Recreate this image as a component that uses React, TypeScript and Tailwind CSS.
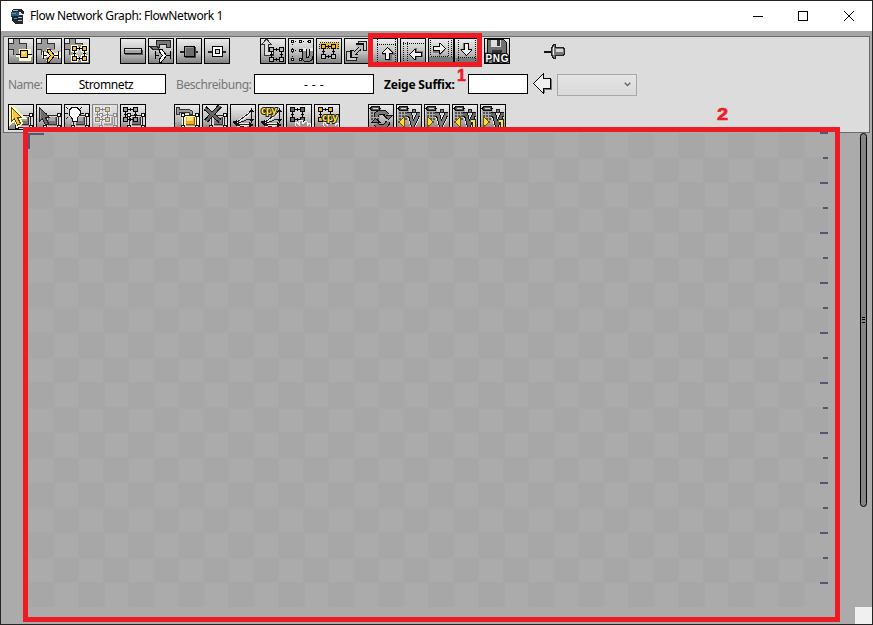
import type { ReactNode } from 'react';

type Kids = { children?: ReactNode };

function Tool({ children, className = '' }: Kids & { className?: string }) {
  return (
    <button className={`block h-[26px] w-[26px] shrink-0 overflow-hidden border border-black bg-linear-to-b from-[#ececec] via-[#bdbdbd] via-60% to-[#808080] p-0 ${className}`}>
      <svg width="24" height="24" viewBox="1 1 24 24" shapeRendering="crispEdges" fill="none">
        {children}
      </svg>
    </button>
  );
}

/* Grey plus in the corner of the "add" tools */
function Plus() {
  return (
    <g>
      <path d="M5 1h7v4h7v7h-7v5H5v-5H1V5h4z" fill="#9b9b9b" />
      <path d="M5.500 1v4.500H1M11.500 1v4.500h7v5M1 11.500h4.500v5" stroke="#333" />
    </g>
  );
}

/* Four linked nodes with arrow heads */
function Net({ x, y, fill = '#d8d8d8', halo = 'none' }: { x: number; y: number; fill?: string; halo?: string }) {
  const lines = 'M4 2.5h6M2.5 5v6M12.5 5v6M5 12.5h5';
  const boxes = 'M.5 .5h4v4h-4zM10.5 .5h4v4h-4zM.5 10.5h4v4h-4zM10.5 10.5h4v4h-4z';
  return (
    <g transform={`translate(${x} ${y})`}>
      <path d={lines + boxes} stroke={halo} strokeWidth="3" />
      <path d={lines} stroke="#000" />
      <path d={boxes} fill={fill} stroke="#000" />
      <path d="M7 1h1v1h1v1H8v1H7zM11 7h3v1h-1v1h-1V8h-1zM8 11v3H7v-1H6v-1h1v-1zM1 7h3v1H3v1H2V8H1z" fill="#000" />
    </g>
  );
}

/* Framed component with four corner handles */
function Component({ gold = false }: { gold?: boolean }) {
  return (
    <g>
      <path d="M9.500 11.500h13v12h-13z" stroke={gold ? '#fffbd0' : '#d8d8d8'} strokeWidth="4" />
      <path d="M9.500 11.500h13v12h-13z" stroke="#222" />
      <path d="M12 13h9v8h-9z" fill={gold ? '#f0ae1d' : '#777'} />
      <path d="M13 13h6v4h-6z" fill={gold ? '#ffe07a' : '#a8a8a8'} />
      <path d="M20 13h1v8h-9v-1h8z" fill={gold ? '#8a5d00' : '#333'} />
      <path d="M7.500 9.500h3v3h-3zM21.500 9.500h3v3h-3zM7.500 21.500h3v3h-3zM21.500 21.500h3v3h-3z" fill="#fff" stroke="#111" />
    </g>
  );
}

function Cursor({ gold = false }: { gold?: boolean }) {
  return (
    <g>
      {gold && <path d="M3 3v15l4-3 3 6 3-2-3-6h4z" stroke="#fff9c2" strokeWidth="4" />}
      <path d="M3.500 3.500v14l3-3 3 7 3-2-3-6h4z" fill={gold ? '#f7c63c' : '#6b6b6b'} stroke={gold ? '#5b4300' : '#222'} />
      <path d="M4.500 6v9" stroke={gold ? '#ffec9a' : '#999'} />
    </g>
  );
}

function Junction({ gold = false }: { gold?: boolean }) {
  return (
    <g>
      <path d="M7 17h16M11 11l7 6-7 7M7.500 14v6M22.500 14v6" stroke={gold ? '#fffbd0' : '#aaa'} strokeWidth="4" />
      <path d="M7 17.500h4M17 17.500h6M7.500 13v8M22.500 13v8" stroke="#000" />
      <path d="M11.500 11v3l3 3.500-3 3.500v3h2l5-6.500-5-6.500z" fill={gold ? '#ffc934' : '#fff'} stroke="#000" />
    </g>
  );
}

function Calculator() {
  return (
    <g>
      <path d="M3 2h9l1 4-1 12H2V5z" fill="#aaa" />
      <path d="M4 2.500h7l1 2-1 2H4l-2-2z" fill="#555" stroke="#111" />
      <path d="M5 4.500h5" stroke="#ddd" />
      <path d="M3 9h8M3 12h8M3 15h8" stroke="#555" strokeWidth="2" strokeDasharray="2 1" />
    </g>
  );
}

function Volume({ back = false, one = false }: { back?: boolean; one?: boolean }) {
  const letter = 'M11 10.5h3l3 11 5-11h2';
  return (
    <Tool>
      <Calculator />
      <path d={letter} stroke="#e8e8e8" strokeWidth="6" />
      <path d={letter} stroke="#111" strokeWidth="4.500" />
      <path d={letter} stroke={one ? '#666' : '#7c7c7c'} strokeWidth="2.500" />
      <path d="M16.500 5.500h3v3h-3z" fill="#777" stroke="#222" />
      {back ? (
        <path d="M8.500 13v10l-6-5z" fill="#ffdb38" stroke="#725400" />
      ) : (
        <path d="M3.500 13v10l6-5z" fill="#ffdb38" stroke="#725400" />
      )}
      {one && (
        <g>
          <path d="M19 16.500h3v8" stroke="#222" strokeWidth="4" />
          <path d="M19 16.500h3v7M18 24h7" stroke="#ffe23f" strokeWidth="2" />
        </g>
      )}
    </Tool>
  );
}

function MoveTool({ turn, dx = 0, dy = 0 }: { turn: number; dx?: number; dy?: number }) {
  return (
    <g transform={`translate(${dx} ${dy}) rotate(${turn} 13 13)`}>
      <path d="M13.500 6.500l6 6v1h-3v6h-6v-6h-3z" fill="#777" />
      <path d="M12.500 6.500l5 5v1h-3v6h-4v-6h-3v-1z" fill="#eee" stroke="#000" />
    </g>
  );
}

function Copy({ x, y }: { x: number; y: number }) {
  return (
    <text
      x={x}
      y={y}
      fill="#ffe23f"
      stroke="#222"
      strokeWidth="2"
      paintOrder="stroke"
      className="font-['Liberation_Sans'] text-[11px] font-bold"
      textLength="16"
    >
      cpy
    </text>
  );
}

function Branches() {
  return (
    <g>
      <path d="M5 20L20 9M7 20h13M7 21l13 4" stroke="#eee" strokeWidth="3" />
      <path d="M6 19L20 8.500M6 20l13-5M7 20.500h13M7 21l13 4" stroke="#222" />
      <path d="M19 8l2.500-4L24 8zM19 15h5l-2.500 4zM2 18l5-2v6zM19 18l5 3-5 3z" fill="#111" />
      <path d="M21.500 5v14" stroke="#111" />
    </g>
  );
}

function Hand() {
  return <path d="M11 25l-2-6 2-1 3 4-1-5 3-1 1 4 2-3 2 1v4l2-3 2 1-1 7z" fill="#999" stroke="#eee" />;
}

function TitleBar() {
  return (
    <header className="flex h-[30px] shrink-0 items-center bg-white pl-[9px]">
      <svg width="15" height="17" viewBox="0 0 15 17" shapeRendering="crispEdges">
        <path d="M3 1h8l3 2v3h-3V4H8v3h5v9H6l-4-3-1-8z" fill="#24262c" />
        <path d="M1 4h8v4H1z" fill="#28577a" />
        <path d="M2 8h6v4H2z" fill="#16233c" />
        <path d="M3 2h5v1H3zM9 5h3v1H9zM8 9h4v1H8zM8 12h4v1H8z" fill="#b7bfc4" />
        <path d="M2 5h4v1H2zM4 10h3v1H4z" fill="#4da3ab" />
      </svg>
      <h1 className="ml-[5px] w-[200px] text-[12px] tracking-[-0.38px] whitespace-nowrap text-black">Flow Network Graph: FlowNetwork 1</h1>
      <svg className="mr-[16px] ml-auto" width="104" height="12" viewBox="0 0 104 12" fill="none" stroke="#000">
        <path d="M1 6.500h10M46.500 1.500h9v9h-9z" shapeRendering="crispEdges" />
        <path d="M92 1l10 10M102 1L92 11" />
      </svg>
    </header>
  );
}

function FirstRow() {
  return (
    <div className="flex h-[26px]">
      <div className="flex gap-0.5">
        <Tool>
          <Plus />
          <path d="M8 17h16M12 12h9v9h-9z" stroke="#fffbd0" strokeWidth="3" />
          <path d="M8 16.500h16" stroke="#000" />
          <path d="M12.500 12.500h7v7h-7z" fill="#ffc42d" stroke="#000" />
          <path d="M14 14h3v2h-3z" fill="#fff0a4" />
        </Tool>
        <Tool><Plus /><Junction gold /></Tool>
        <Tool><Plus /><Net x={8} y={8} fill="#f4bd34" halo="#fffbd0" /></Tool>
      </div>
      <div className="ml-[30px] flex gap-0.5">
        <Tool>
          <path d="M5 12h18v5H5z" fill="#555" />
          <path d="M4.500 10.500h17v5h-17z" fill="#a6a6a6" stroke="#111" />
          <path d="M5 11.500h16" stroke="#ddd" />
        </Tool>
        <Tool>
          <path d="M8 2h14v8h-4V7h-6v4H3V8h5z" fill="#777" />
          <path d="M8.500 7V2.500h14v7h-4v-3h-7v4M2 8.500h7l3 3H5z" stroke="#222" />
          <Junction />
        </Tool>
        <Tool>
          <path d="M4 13.500h18M4 14.500h18" stroke="#222" />
          <path d="M9 9h11v11H9z" fill="#444" />
          <path d="M8.500 8.500h10v10h-10z" fill="#6d6d6d" stroke="#000" />
          <path d="M9 9.500h8M9.500 9v8" stroke="#999" />
        </Tool>
        <Tool>
          <path d="M4 13.500h18M4 14.500h18" stroke="#222" />
          <path d="M8.500 8.500h10v10h-10z" fill="#fff" stroke="#000" />
          <path d="M11.500 11.500h4v4h-4z" fill="#ccc" stroke="#000" />
        </Tool>
      </div>
      <div className="ml-[30px] flex gap-0.5">
        <Tool>
          <path d="M6.500 1l5 5.500h-3v7h5v4h-9v-11h-3z" fill="#ddd" stroke="#333" />
          <Net x={9} y={9} fill="#bbb" />
        </Tool>
        <Tool>
          <path d="M3.500 2.500h2v2h-2zM11.500 2.500h2v2h-2zM20.500 2.500h2v2h-2zM3.500 11.500h2v2h-2zM11.500 11.500h2v2h-2zM3.500 20.500h2v2h-2zM11.500 20.500h2v2h-2z" fill="#fff" stroke="#111" />
          <path d="M4.500 6v14M7 3.500h13M7 12.500h4" stroke="#111" strokeDasharray="1 3" />
          <path d="M16 11v8c0 4 7 4 7-1v-7" stroke="#111" strokeWidth="5" />
          <path d="M16 11v8c0 4 7 4 7-1v-7" stroke="#888" strokeWidth="3" />
          <path d="M14.500 11h3M21.500 11h3" stroke="#eee" strokeWidth="3" />
        </Tool>
        <Tool>
          <path d="M3.500 4.500h19v6h-19z" fill="#edb72d" stroke="#222" strokeDasharray="1 1" />
          <Net x={5} y={6} fill="#c8c8c8" />
          <path d="M5.500 6.500h4v4h-4zM15.500 6.500h4v4h-4z" fill="#efb92b" stroke="#000" />
        </Tool>
        <Tool>
          <path d="M2.500 13v9.500H12v-4H7V13zM14 3.500h8.500V12h-4V8H14z" fill="#ccc" stroke="#222" />
          <path d="M9 17L18 8M8 12v6h6M12 7h6v6" stroke="#111" strokeWidth="4" />
          <path d="M9 17L18 8M8.500 13v4.500h5M12 7.500h5.500v5" stroke="#bbb" strokeWidth="2" />
        </Tool>
      </div>
      <div className="ml-0.5 flex">
        <Tool>
          <path d="M5.500 1v24M23.500 1v24M5 6.500h19" stroke="#111" strokeDasharray="1 1" />
          <MoveTool turn={0} dx={3} dy={3} />
        </Tool>
        <Tool className="ml-0.5">
          <path d="M3.500 4v21M7.500 4v21M3 5.500h22" stroke="#111" strokeDasharray="1 1" />
          <MoveTool turn={-90} dx={3} dy={3} />
        </Tool>
        <Tool className="ml-0.5">
          <path d="M1 19h24v5H1z" fill="#777" />
          <path d="M2.500 2v16h18V2M23.500 2v17" stroke="#111" strokeDasharray="1 1" />
          <MoveTool turn={90} dx={-2} dy={-2} />
        </Tool>
        <Tool>
          <path d="M2 20h22v4H2z" fill="#777" />
          <path d="M4.500 2v21M21.500 2v21M4 19.500h18" stroke="#111" strokeDasharray="1 1" />
          <MoveTool turn={180} dx={-1} dy={-2} />
        </Tool>
        <Tool className="ml-1">
          <path d="M3.500 1.500h16l3 3v12h-19z" fill="#707070" stroke="#111" />
          <path d="M7 2h10v7H7z" fill="#ddd" />
          <path d="M13 2h3v6h-3zM8 12h10v5H8z" fill="#333" />
          <text x="1.500" y="23.500" fill="#fff" stroke="#111" strokeWidth="2.500" paintOrder="stroke" className="font-['Liberation_Sans'] text-[10px] font-bold" textLength="23">PNG</text>
        </Tool>
      </div>
      <svg className="mt-[5px] ml-[34px]" width="22" height="17" viewBox="0 0 22 17" shapeRendering="crispEdges" fill="none">
        <path d="M0 8.500h9" stroke="#111" strokeWidth="2" />
        <path d="M7.500 5.500l2-4h2v3h8l1 2v5l-2 1h-7v3h-2l-2-4z" fill="#777" stroke="#222" />
        <path d="M12 6h7v3h-7z" fill="#d5d5d5" />
        <path d="M9.500 4v8" stroke="#eee" />
      </svg>
    </div>
  );
}

function FieldRow() {
  return (
    <div className="mt-2 flex h-[25px] items-start text-[12px] leading-[20px]">
      <label className="mt-[3px] w-[38px] tracking-[-0.5px] text-[#777]">Name:</label>
      <div className="mt-0.5 h-5 w-[120px] border border-black bg-white text-center leading-[19px] tracking-[-0.4px]">Stromnetz</div>
      <label className="mt-[3px] ml-[10px] w-[78px] tracking-[-0.42px] text-[#777]">Beschreibung:</label>
      <div className="mt-0.5 h-5 w-[120px] border border-black bg-white text-center leading-[19px] tracking-[0.4px]">- - -</div>
      <label className="mt-[3px] ml-[10px] w-[84px] font-bold tracking-[-0.2px] whitespace-nowrap">Zeige Suffix:</label>
      <div className="mt-0.5 h-5 w-[60px] border border-black bg-white" />
      <svg className="ml-[4px]" width="21" height="24" viewBox="0 0 21 24" shapeRendering="crispEdges" fill="none">
        <path d="M12.500 21v-3.500h7V7" stroke="#777" />
        <path d="M1.500 11.500l10-10v5h7v10h-7v5z" fill="#eee" stroke="#000" />
      </svg>
      <div className="mt-0.5 ml-[4px] flex h-[22px] w-20 items-start justify-end border border-[#a8a8a8] bg-linear-to-b from-[#e5e5e5] to-[#d9d9d9] pt-[7px] pr-[5px]">
        <svg width="7" height="5" viewBox="0 0 7 5" fill="none" stroke="#666" strokeWidth="1.300"><path d="M.7 .7l2.800 2.800L6.300 .7" /></svg>
      </div>
    </div>
  );
}

function LastRow() {
  return (
    <div className="mt-[7px] flex h-[26px]">
      <div className="flex gap-0.5">
        <Tool><Component /><Cursor gold /></Tool>
        <Tool><Component /><Cursor /></Tool>
        <Tool>
          <Component />
          <path d="M8 3.500h5l3 3v4l-3 4v3H8v-3l-3-4v-4z" fill="#fff" stroke="#111" />
          <path d="M2 3l2 2M1 9h3M2 15l2-2M18 3l-2 2M17 9h3" stroke="#111" />
        </Tool>
        <Tool className="opacity-40"><Component /><Net x={3} y={3} fill="#f4b52f" halo="#fff" /></Tool>
        <Tool><Component /><Net x={3} y={3} fill="#999" /></Tool>
      </div>
      <div className="ml-[28px] flex gap-0.5">
        <Tool>
          <Component gold />
          <path d="M2.500 3.500h3v2h10l3 2v3h-3v-2h-10v2h-3z" fill="#999" stroke="#333" />
        </Tool>
        <Tool>
          <Component />
          <path d="M3 4l15 13M18 2L4 17" stroke="#111" strokeWidth="4.500" />
          <path d="M3 4l15 13M18 2L4 17" stroke="#666" strokeWidth="2.500" />
        </Tool>
        <Tool><Branches /></Tool>
        <Tool><Branches /><Copy x={3} y={10} /></Tool>
        <Tool><Net x={4} y={3} fill="#666" /><Hand /></Tool>
        <Tool><Net x={4} y={3} fill="#e9b331" /><Hand /><Copy x={8} y={17} /></Tool>
      </div>
      <div className="ml-[28px] flex gap-0.5">
        <Tool>
          <Calculator />
          <path d="M8 13c0-6 9-6 11-2M20 18c-2 6-9 6-12 2" stroke="#111" strokeWidth="5" />
          <path d="M15.500 11.500h9l-4 4zM3.500 18.500h9l-5-4z" fill="#777" stroke="#111" />
          <path d="M8 13c0-6 9-6 11-2M20 18c-2 6-9 6-12 2" stroke="#777" strokeWidth="3" />
        </Tool>
        <Volume back />
        <Volume />
        <Volume back one />
        <Volume one />
      </div>
    </div>
  );
}

function Canvas() {
  const ticks = Array.from({ length: 19 }, (_, i) => i);
  return (
    <main className="h-[495px] w-[817px] border-5 border-[#ed1c24] bg-[#ababab]">
      <svg width="807" height="485" viewBox="28 132 807 485" shapeRendering="crispEdges">
        <defs>
          <pattern id="tiles" x="28" y="133" width="50" height="50" patternUnits="userSpaceOnUse">
            <path d="M0 0h50v50H0z" fill="#ababab" />
            <path d="M0 0h25v25H0zM25 25h25v25H25z" fill="#a7a7a7" />
            <path d="M25 0h2v50h-2zM0 0h1v50H0zM0 24h50v2H0zM0 49h50v1H0z" fill="#a8a8a8" />
          </pattern>
        </defs>
        <path d="M28 133h800v474H28z" fill="url(#tiles)" />
        <path d="M28 133h16v2H30v14h-2z" fill="#56566f" />
        {ticks.map((i) => (
          <rect key={i} x={i % 2 ? 823 : 820} y={i ? 132 + i * 25 : 132} width={i % 2 ? 5 : 8} height="2" fill="#56566f" />
        ))}
      </svg>
    </main>
  );
}

function ScrollBar() {
  return (
    <div className="mt-[6px] ml-[20px] flex w-[12px] flex-col">
      <div className="flex h-[374px] w-[7px] flex-col items-center justify-center gap-px rounded-full border border-black bg-[#858585]">
        <div className="h-px w-[3px] bg-black" />
        <div className="h-px w-[3px] bg-black" />
        <div className="mt-px h-px w-[3px] bg-black" />
      </div>
    </div>
  );
}

export default function App() {
  return (
    <div className="relative flex h-[625px] w-[873px] flex-col overflow-hidden border border-[#242424] bg-[#ababab] font-['Noto_Sans','Open_Sans',sans-serif] text-black">
      <TitleBar />
      <div className="h-[5px] shrink-0 bg-[#a5a5a5]" />
      <section className="mr-0.5 ml-[2px] h-[97px] shrink-0 border border-[#6c6c6c] bg-[#dcdcdc] pt-px pl-1">
        <FirstRow />
        <FieldRow />
        <LastRow />
      </section>
      <div className="relative z-10 -mt-[6px] ml-[22px] flex shrink-0">
        <Canvas />
        <ScrollBar />
      </div>
      <div className="absolute right-0 bottom-0 h-[17px] w-[17px] bg-[#f0f0f0]" />
      <div className="absolute top-[32px] left-[367px] z-20 h-[34px] w-[114px] border-5 border-[#ed1c24]" />
      <span className="absolute top-[66px] left-[456px] z-20 font-['Liberation_Sans',sans-serif] text-[16px] leading-[18px] font-bold text-[#ed1c24] [-webkit-text-stroke:0.6px_#ed1c24]">1</span>
      <span className="absolute top-[105px] left-[717px] z-20 scale-x-125 font-['Liberation_Sans',sans-serif] text-[16px] leading-[18px] font-bold text-[#ed1c24] [-webkit-text-stroke:0.6px_#ed1c24]">2</span>
    </div>
  );
}
